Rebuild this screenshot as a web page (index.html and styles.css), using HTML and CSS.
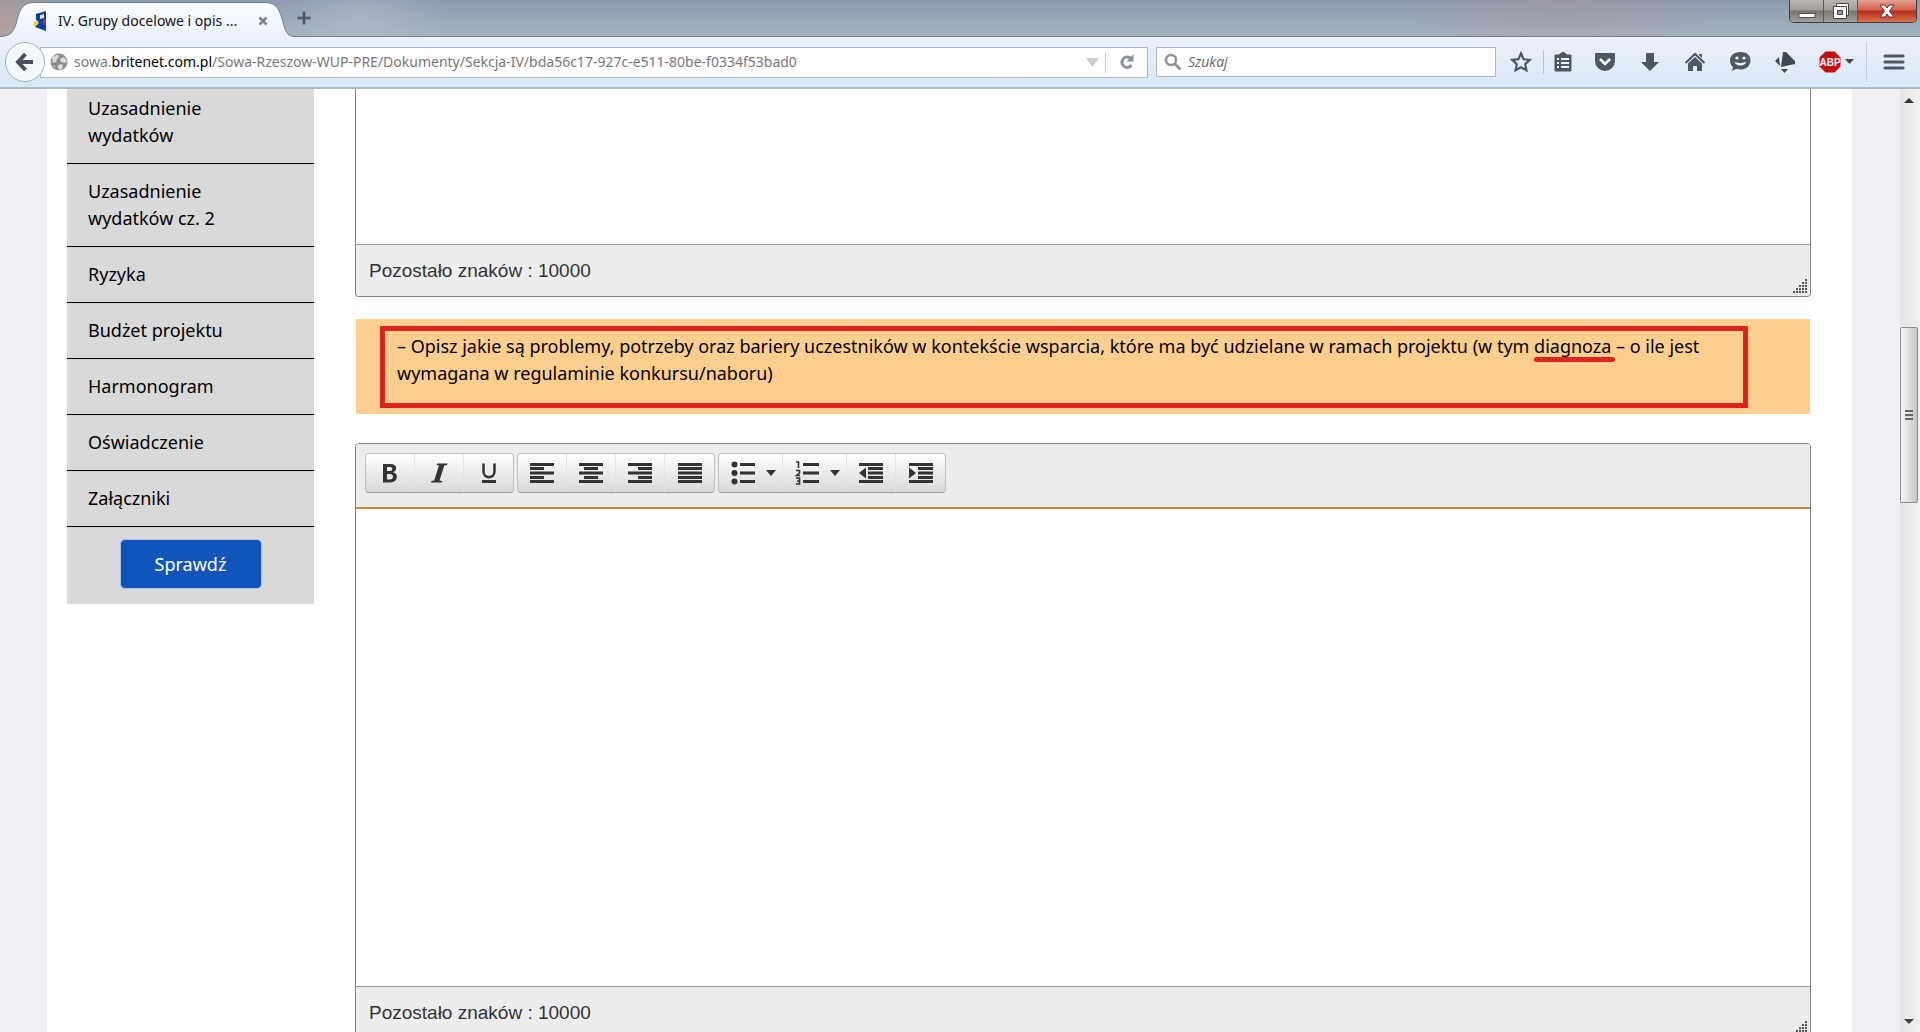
FILE: index.html
```html
<!DOCTYPE html>
<html lang="pl">
<head>
<meta charset="utf-8">
<title>IV. Grupy docelowe i opis ...</title>
<link rel="stylesheet" href="styles.css">
</head>
<body>
<header class="browser">
  <div class="titlebar">
    <div class="tab">
      <svg class="tab-shape" viewBox="0 0 294 37" aria-hidden="true"><defs><linearGradient id="tabfill" x1="0" y1="0" x2="0" y2="1"><stop offset="0" stop-color="#fbfcfe"/><stop offset="1" stop-color="#eaf2fb"/></linearGradient></defs><path d="M0 37C11 36 13 32 16 24C19 12 21 3 33 2.500H266C278 3 280 12 283 22C285 32 288 36 294 37Z" fill="url(#tabfill)"/><path d="M0 36.500C11 36 13 32 16 24C19 12 21 3 33 2.500H266C278 3 280 12 283 22C285 32 288 36 294 36.500" fill="none" stroke="#76808c"/></svg>
      <svg class="favicon" viewBox="0 0 12 20" aria-hidden="true"><path d="M2 3L12 0V20L1 16V13L5 11L2 9Z" fill="#0b3f9c"/><path d="M6 4l4-1v4l-4 1z" fill="#dce9fb"/><path d="M0 10l5 2-4 4-1-2z" fill="#f3d31b"/><path d="M9 9l3-1v5l-3 1z" fill="#c2214a"/></svg>
      <span class="tab-title">IV. Grupy docelowe i opis ...</span>
      <button class="bare tab-close" aria-label="Zamknij kartę"><svg width="10" height="10" viewBox="0 0 10 10"><path d="M1.500 1.500l7 7M8.500 1.500l-7 7" stroke="#7d8288" stroke-width="2.500"/></svg></button>
    </div>
    <button class="bare new-tab" aria-label="Nowa karta"><svg width="14" height="14" viewBox="0 0 14 14"><path d="M7 0.500v13M0.500 7h13" stroke="#4c545d" stroke-width="2.500"/></svg></button>
    <div class="window-buttons">
      <button class="win win-min" aria-label="Minimalizuj"><svg width="18" height="18" viewBox="0 0 18 18"><rect x="1" y="11.500" width="16" height="4" fill="#fff" stroke="#555"/></svg></button>
      <button class="win win-max" aria-label="Przywróć"><svg width="18" height="18" viewBox="0 0 18 18"><path d="M4.500 1.500h12v12h-12z" fill="#fff" stroke="#444"/><path d="M1.500 4.500h13v12h-13z" fill="#fff" stroke="#444"/><path d="M5.500 8.500h5v4h-5z" fill="#999" stroke="#444"/></svg></button>
      <button class="win win-close" aria-label="Zamknij"><svg width="18" height="18" viewBox="0 0 18 18"><path d="M2 3h5l2 3 2-3h5l-4.500 6 4.500 6h-5l-2-3-2 3H2l4.500-6z" fill="#fff" stroke="#5a3030"/></svg></button>
    </div>
  </div>
  <nav class="toolbar" aria-label="Pasek nawigacji">
    <button class="back" aria-label="Wstecz"><svg width="20" height="20" viewBox="0 0 20 20"><path d="M10.500 2L3 10l7.500 8M3.500 10H18" fill="none" stroke="#47525d" stroke-width="4"/></svg></button>
    <div class="urlbar">
      <svg class="globe" width="18" height="18" viewBox="0 0 18 18" aria-hidden="true"><circle cx="9" cy="9" r="8.500" fill="#8d8d8d"/><path d="M2 5c2-3 4-3 6-3l1 2-2 2-1 3-3 1zM10 6l4-2 3 4-2 2-4-1zM8 12l4-1 1 3-3 3-2-2zM3 12l2 1v2z" fill="#dcdcdc"/></svg>
      <div class="url" role="textbox" contenteditable="true" spellcheck="false" aria-label="Adres">sowa.<b>britenet.com.pl</b>/Sowa-Rzeszow-WUP-PRE/Dokumenty/Sekcja-IV/bda56c17-927c-e511-80be-f0334f53bad0</div>
      <button class="bare history" aria-label="Historia"><svg width="13" height="9" viewBox="0 0 13 9"><path d="M0 0h13L6.500 9z" fill="#c9cbcd"/></svg></button>
      <button class="bare reload" aria-label="Odśwież"><svg width="16" height="16" viewBox="0 0 16 16"><path d="M12 4.800A5.200 5.200 0 1 0 12.500 11" fill="none" stroke="#8b9299" stroke-width="3"/><path d="M14.500 0v7.500H7.500z" fill="#8b9299"/></svg></button>
    </div>
    <label class="search">
      <svg width="18" height="18" viewBox="0 0 18 18" aria-hidden="true"><circle cx="7" cy="7" r="5" fill="none" stroke="#8f9296" stroke-width="2.500"/><path d="M10.500 10.500l6 6" stroke="#8f9296" stroke-width="3"/></svg>
      <input type="search" placeholder="Szukaj" aria-label="Szukaj">
    </label>
    <div class="tools">
      <button class="bare tool star" aria-label="Zakładka"><svg width="22" height="22" viewBox="0 0 22 22"><path d="M11 2.500l2.600 5.700 6.100.7-4.500 4.200 1.200 6.100-5.400-3-5.400 3 1.200-6.100L2.300 8.900l6.100-.7z" fill="none" stroke="#4c5863" stroke-width="2.200"/></svg></button>
      <button class="bare tool lines" aria-label="Zakładki"><svg width="22" height="22" viewBox="0 0 22 22"><path d="M3 4h4l1-1 3-2 3 2 1 1h4v16H3z" fill="#4c5863" stroke="#4c5863" stroke-linejoin="round"/><path d="M5 8h2M9 8h8M5 12h2M9 12h8M5 16h2M9 16h8" stroke="#eff5fb" stroke-width="2"/></svg></button>
      <button class="bare tool" aria-label="Pocket"><svg width="22" height="22" viewBox="0 0 22 22"><path d="M2 2h18q1 0 1 1v7a10 10 0 0 1-20 0V3q0-1 1-1z" fill="#4c5863"/><path d="M6 8l5 5 5-5" fill="none" stroke="#fff" stroke-width="2.600"/></svg></button>
      <button class="bare tool" aria-label="Pobrane"><svg width="22" height="22" viewBox="0 0 22 22"><path d="M7 2h8v9h5l-9 9-9-9h5z" fill="#4c5863"/></svg></button>
      <button class="bare tool" aria-label="Strona startowa"><svg width="22" height="22" viewBox="0 0 22 22"><path d="M1.500 12L11 3l9.500 9" fill="none" stroke="#4c5863" stroke-width="2"/><path d="M4 12.500l7-6.500 7 6.500V20h-5v-5H9v5H4zM15 3h3v4l-3-3z" fill="#4c5863"/></svg></button>
      <button class="bare tool" aria-label="Czat"><svg width="22" height="22" viewBox="0 0 22 22"><path d="M11.500 1C18 1 21.500 4.500 21.500 9.500S17 18.500 12 18.500c-2 0-3-.3-4-.7L2 20c1.500-1.500 2-2.500 2-4C2 14.500 1 12.500 1 9.500 1 4.500 5 1 11.500 1z" fill="#4c5863"/><circle cx="8" cy="7" r="1.600" fill="#fff"/><circle cx="15" cy="7" r="1.600" fill="#fff"/><path d="M5.500 11c1.500 4.500 10 4.500 12 0-4 1.500-8 1.500-12 0z" fill="#fff"/></svg></button>
      <button class="bare tool" aria-label="Dodatek"><svg width="22" height="22" viewBox="0 0 22 22"><path d="M9 1h3l9 9v3l-14 3zM5 6l1 9-5-5zM7 18h7l-3.500 4z" fill="#3f4a54"/></svg></button>
      <button class="bare tool abp" aria-label="Adblock Plus"><svg width="36" height="22" viewBox="0 0 36 22"><path d="M6.500 0.500h9l6 6v9l-6 6h-9l-6-6v-9z" fill="#c70d12"/><text x="11" y="15" class="abp-text">ABP</text><path d="M26 8h9l-4.500 5z" fill="#3f4a54"/></svg></button>
      <button class="bare tool menu" aria-label="Menu"><svg width="22" height="18" viewBox="0 0 22 18"><path d="M2 3h18M2 9h18M2 15h18" stroke="#4c5863" stroke-width="3.200" stroke-linecap="round"/></svg></button>
    </div>
  </nav>
</header>
<div class="viewport">
  <div class="page">
    <aside class="sidebar">
      <ul class="sections">
        <li><a href="#">Uzasadnienie wydatków</a></li>
        <li><a href="#">Uzasadnienie wydatków cz. 2</a></li>
        <li><a href="#">Ryzyka</a></li>
        <li><a href="#">Budżet projektu</a></li>
        <li><a href="#">Harmonogram</a></li>
        <li><a href="#">Oświadczenie</a></li>
        <li><a href="#">Załączniki</a></li>
      </ul>
      <button class="check">Sprawdź</button>
    </aside>
    <main class="content">
      <section class="editor editor-first">
        <textarea class="area area-short" aria-label="Opis grupy docelowej"></textarea>
        <div class="counter"><span>Pozostało znaków : 10000</span><svg class="grip" width="14" height="14" viewBox="0 0 14 14" aria-hidden="true"><path d="M12 1h2M9 4h5M6 7h8M3 10h11M0 13h14" stroke="#555" stroke-width="2" stroke-dasharray="2 1"/></svg></div>
      </section>
      <div class="hint">
        <p class="frame">– Opisz jakie są problemy, potrzeby oraz bariery uczestników w kontekście wsparcia, które ma być udzielane w ramach projektu (w tym <span class="marked">diagnoza</span> – o ile jest wymagana w regulaminie konkursu/naboru)</p>
      </div>
      <section class="editor editor-second">
        <div class="format-bar">
          <div class="group">
            <button class="fmt" aria-label="Pogrubienie"><svg width="22" height="22" viewBox="0 0 22 22"><path d="M4 2h7.500c7 0 7 7 2.500 8.300C20 11.500 19 20.500 11.500 20.500H4z M8 5v4h3c3 0 3-4 0-4z M8 12v5.500h3c4 0 4-5.500 0-5.500z" fill-rule="evenodd"/></svg></button>
            <button class="fmt" aria-label="Kursywa"><svg width="22" height="22" viewBox="0 0 22 22"><path d="M9 1.500h10.500l-.4 1.500-2.800.5L11.500 18.500l2.700.5-.4 1.500H3l.4-1.500 2.800-.5L11 3.500 8.600 3z"/></svg></button>
            <button class="fmt" aria-label="Podkreślenie"><svg width="22" height="22" viewBox="0 0 22 22"><path d="M5.500 1.500v8c0 7.500 11 7.500 11 0v-8" fill="none" stroke="#333" stroke-width="2.500"/><path d="M4 18h14v3H4z"/></svg></button>
          </div>
          <div class="group">
            <button class="fmt" aria-label="Do lewej"><svg width="24" height="22" viewBox="0 0 24 22"><path d="M0 1h24v3H0zM0 5h14v3H0zM0 9.500h24v3H0zM0 14h14v3H0zM0 18h24v3H0z"/></svg></button>
            <button class="fmt" aria-label="Do środka"><svg width="24" height="22" viewBox="0 0 24 22"><path d="M0 1h24v3H0zM5 5h14v3H5zM0 9.500h24v3H0zM5 14h14v3H5zM0 18h24v3H0z"/></svg></button>
            <button class="fmt" aria-label="Do prawej"><svg width="24" height="22" viewBox="0 0 24 22"><path d="M0 1h24v3H0zM10 5h14v3H10zM0 9.500h24v3H0zM10 14h14v3H10zM0 18h24v3H0z"/></svg></button>
            <button class="fmt" aria-label="Wyjustuj"><svg width="24" height="22" viewBox="0 0 24 22"><path d="M0 1h24v3H0zM0 5h24v3H0zM0 9.500h24v3H0zM0 14h24v3H0zM0 18h24v3H0z"/></svg></button>
          </div>
          <div class="group">
            <button class="fmt fmt-wide" aria-label="Lista punktowana"><svg width="24" height="24" viewBox="0 0 24 24"><circle cx="3.500" cy="3.500" r="3"/><circle cx="3.500" cy="12" r="3"/><circle cx="3.500" cy="20.500" r="3"/><path d="M9 2h15v3H9zM9 10.500h15v3H9zM9 19h15v3H9z"/></svg><svg width="10" height="6" viewBox="0 0 10 6"><path d="M0 0h10L5 6z"/></svg></button>
            <button class="fmt fmt-wide" aria-label="Lista numerowana"><svg width="24" height="24" viewBox="0 0 24 24"><path d="M1 1h2.500v6M1 9.500h3.500v2.500l-3 2.500H5M1 17h3.500v6H1M2 20h2" fill="none" stroke="#333" stroke-width="1.600"/><path d="M8 2h16v3H8zM8 10.500h16v3H8zM8 19h16v3H8z"/></svg><svg width="10" height="6" viewBox="0 0 10 6"><path d="M0 0h10L5 6z"/></svg></button>
            <button class="fmt" aria-label="Zmniejsz wcięcie"><svg width="24" height="22" viewBox="0 0 24 22"><path d="M0 1h24v3H0zM9 5h15v3H9zM9 9.500h15v3H9zM9 14h15v3H9zM0 18h24v3H0zM7 5.500v11L0 11z"/></svg></button>
            <button class="fmt" aria-label="Zwiększ wcięcie"><svg width="24" height="22" viewBox="0 0 24 22"><path d="M0 1h24v3H0zM9 5h15v3H9zM9 9.500h15v3H9zM9 14h15v3H9zM0 18h24v3H0zM0 5.500v11L7 11z"/></svg></button>
          </div>
        </div>
        <textarea class="area area-tall" aria-label="Problemy, potrzeby i bariery uczestników"></textarea>
        <div class="counter"><span>Pozostało znaków : 10000</span><svg class="grip" width="14" height="14" viewBox="0 0 14 14" aria-hidden="true"><path d="M12 1h2M9 4h5M6 7h8M3 10h11M0 13h14" stroke="#555" stroke-width="2" stroke-dasharray="2 1"/></svg></div>
      </section>
    </main>
  </div>
  <div class="scrollbar" aria-hidden="true">
    <svg width="10" height="5" viewBox="0 0 10 5"><path d="M0 5h10L5 0z" fill="#333"/></svg>
    <div class="track-before"></div>
    <div class="thumb"><i></i><i></i><i></i></div>
    <div class="track-after"></div>
    <svg width="10" height="5" viewBox="0 0 10 5"><path d="M0 0h10L5 5z" fill="#444"/></svg>
  </div>
</div>
</body>
</html>
```
FILE: styles.css
```css
* { box-sizing: border-box; }
body {
  margin: 0;
  height: 100vh;
  display: flex;
  flex-direction: column;
  overflow: hidden;
  font-family: "Noto Sans", sans-serif;
  background: #f0f0f5;
}
svg { display: block; flex: none; }
button { font: inherit; }
.bare {
  display: flex;
  align-items: center;
  justify-content: center;
  padding: 0;
  border: 0;
  background: none;
}

/* Browser chrome */
.browser { flex: none; }
.titlebar {
  display: flex;
  height: 37px;
  border-bottom: 1px solid #747e8a;
  background:
    radial-gradient(ellipse 60px 50px at 0 20px, rgba(190, 150, 140, .7), transparent),
    radial-gradient(ellipse 160px 60px at 1560px 0, rgba(170, 150, 155, .5), transparent),
    radial-gradient(ellipse 90px 50px at 360px 20px, rgba(185, 195, 205, .5), transparent),
    linear-gradient(#8d9bae, #a4b2bf);
}
.tab {
  position: relative;
  display: flex;
  align-items: center;
  width: 294px;
  height: 37px;
  padding: 4px 26px 0 34px;
}
.tab-shape { position: absolute; inset: 0; width: 294px; height: 37px; }
.favicon { position: relative; width: 12px; height: 20px; }
.tab-title {
  position: relative;
  flex: 1;
  margin-left: 12px;
  font-size: 14px;
  line-height: 20px;
  white-space: nowrap;
  color: #111;
}
.tab-close { position: relative; }
.new-tab { width: 20px; }
.window-buttons {
  display: flex;
  height: 23px;
  margin: 0 3px 0 auto;
  border: 1px solid #3d3f43;
  border-top: 0;
  border-radius: 0 0 5px 5px;
  overflow: hidden;
}
.win {
  display: flex;
  align-items: center;
  justify-content: center;
  width: 34px;
  padding: 0;
  border: 0;
  border-right: 1px solid #55585c;
  background: linear-gradient(#b9b6b4, #a19d99 45%, #77736f 50%, #a39f9b);
}
.win-close {
  width: 58px;
  border-right: 0;
  background: linear-gradient(#e3a394, #d2604c 45%, #b52d14 50%, #dc7350);
}
.toolbar {
  display: flex;
  align-items: center;
  height: 52px;
  padding-left: 5px;
  border-bottom: 2px solid #a9bacd;
  background: linear-gradient(#ecf2fb, #d9e7f6);
}
.back {
  display: flex;
  align-items: center;
  justify-content: center;
  z-index: 1;
  width: 40px;
  height: 40px;
  padding: 0;
  border: 1px solid #9fb0c3;
  border-radius: 50%;
  background: #f4f8fc;
}
.urlbar {
  display: flex;
  align-items: center;
  flex: 1;
  min-width: 0;
  height: 31px;
  margin-left: -5px;
  padding-left: 9px;
  border: 1px solid #a5b8cc;
  background: #fff;
}
.url {
  flex: 1;
  min-width: 0;
  margin-left: 6px;
  overflow: hidden;
  font-size: 14px;
  line-height: 22px;
  white-space: nowrap;
  color: #777;
}
.url b { font-weight: 400; color: #000; }
.history { width: 26px; height: 21px; border-right: 1px solid #c6ced6; }
.reload { width: 41px; }
.search {
  display: flex;
  align-items: center;
  width: 340px;
  height: 30px;
  margin-left: 8px;
  padding-left: 7px;
  border: 1px solid #a5b8cc;
  background: #fff;
}
.search input {
  flex: 1;
  min-width: 0;
  padding: 0 6px;
  border: 0;
  outline: 0;
  background: none;
  font: italic 14px/22px "Open Sans", sans-serif;
}
.search input::placeholder { color: #666; opacity: 1; }
.tools { display: flex; align-items: center; flex: none; padding-left: 3px; }
.tool { width: 45px; height: 40px; }
.star { height: 24px; border-right: 1px solid #b8c5d3; }
.lines { width: 38px; }
.abp { width: 59px; }
.abp-text { font: 700 10px "Liberation Sans", sans-serif; fill: #fff; text-anchor: middle; }
.menu { width: 54px; border-left: 1px solid #c3d0de; }

/* Page */
.viewport { display: flex; flex: 1; min-height: 0; }
.page {
  display: flex;
  align-items: flex-start;
  flex: 1;
  min-width: 0;
  gap: 41px;
  margin: 0 48px 0 47px;
  padding: 0 41px 0 20px;
  overflow: hidden;
  background: #fff;
}
.sidebar { flex: none; width: 247px; padding-bottom: 15px; background: #d9d9d9; }
.sections { margin: 0; padding: 0; list-style: none; }
.sections li { padding: 14px 60px 14px 21px; border-bottom: 1px solid #000; }
.sections li:first-child { padding-top: 6px; }
.sections a {
  display: block;
  font-size: 18px;
  line-height: 27px;
  color: #000;
  text-decoration: none;
}
.check {
  display: block;
  height: 50px;
  width: 142px;
  margin: 12px auto 0;
  padding: 0;
  border: 1px solid #a9c4ea;
  border-radius: 5px;
  background: #1155bb;
  font-size: 18px;
  color: #fff;
}
.content { flex: 1; min-width: 0; }
.editor { border: 1px solid #808080; border-radius: 4px; background: #fff; overflow: hidden; }
.editor-first { border-top: 0; border-radius: 0 0 4px 4px; }
.area {
  display: block;
  width: 100%;
  padding: 8px;
  border: 0;
  outline: 0;
  resize: none;
  font: 18px/27px "Liberation Sans", sans-serif;
}
.area-short { height: 155px; }
.area-tall { height: 477px; }
.counter {
  display: flex;
  align-items: center;
  justify-content: space-between;
  height: 52px;
  padding: 0 3px 0 13px;
  border-top: 1px solid #999;
  background: #ededed;
  font: 19px/24px "Liberation Sans", sans-serif;
  color: #333;
}
.grip { align-self: flex-end; margin-bottom: 3px; }
.hint { margin: 22px 1px 29px; padding: 7px 62px 6px 24px; background: #fdcf8f; }
.frame {
  margin: 0;
  padding: 2px 12px 16px;
  border: 5px solid #df241f;
  font-size: 18px;
  line-height: 27px;
  color: #000;
}
.marked { position: relative; }
.marked::after {
  content: "";
  position: absolute;
  left: 0;
  right: -4px;
  bottom: -4px;
  height: 5px;
  border-radius: 3px;
  background: #df241f;
}
.format-bar {
  display: flex;
  gap: 3px;
  height: 65px;
  padding: 9px;
  border-bottom: 2px solid #c4893f;
  background: #ededed;
}
.group {
  display: flex;
  height: 40px;
  border: 1px solid #c2c2c2;
  border-bottom-color: #9c9c9c;
  border-radius: 4px;
  background: linear-gradient(#fff, #d8d8d8);
}
.fmt {
  display: flex;
  align-items: center;
  justify-content: center;
  width: 49px;
  padding: 0;
  border: 0;
  border-right: 1px solid #e4e4e4;
  background: none;
  fill: #333;
}
.fmt:last-child { border-right: 0; }
.fmt-wide { width: 64px; padding-left: 6px; gap: 11px; }

/* Scrollbar */
.scrollbar {
  display: flex;
  flex-direction: column;
  align-items: center;
  flex: none;
  width: 20px;
  padding: 9px 2px 8px 0;
  background: linear-gradient(90deg, #e4e4e4, #f1f1f1);
}
.track-before { flex: 224; }
.track-after { flex: 516; }
.thumb {
  display: flex;
  flex-direction: column;
  align-items: center;
  justify-content: center;
  gap: 2px;
  flex: 174;
  width: 18px;
  border: 1px solid #8e8e8e;
  border-radius: 2px;
  background: linear-gradient(90deg, #f7f7f7, #dedee0 50%, #c4c5c8);
}
.thumb i { width: 8px; height: 2px; background: #666; }
```
